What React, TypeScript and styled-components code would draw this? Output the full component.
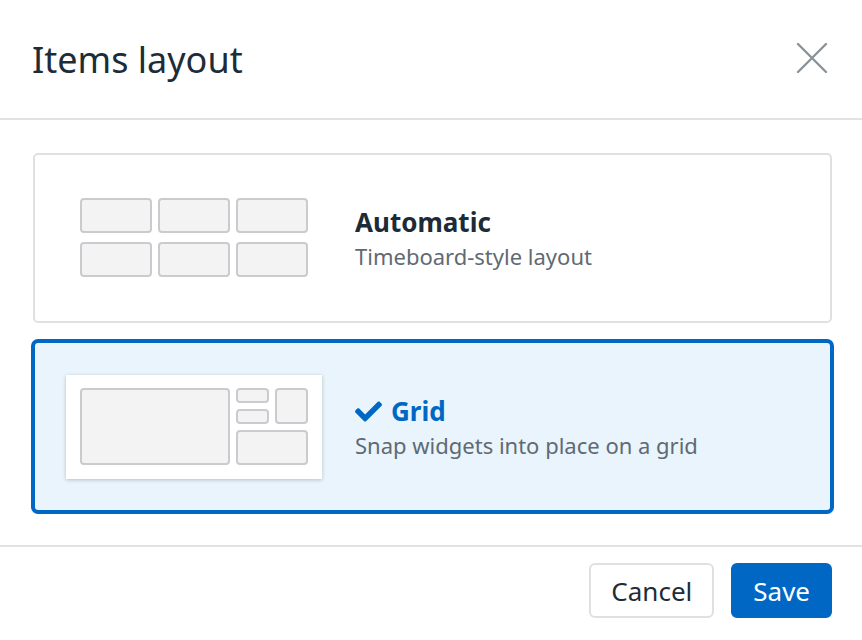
import React from "react";
import styled, { createGlobalStyle } from "styled-components";
import { FaCheck } from "react-icons/fa";

const Global = createGlobalStyle`
  html, body { margin: 0; padding: 0; background: #ffffff; }
  body { font-family: "Noto Sans", "Open Sans", sans-serif; }
  * { box-sizing: border-box; }
`;

const Dialog = styled.div`
  width: 862px;
  height: 640px;
  background: #fff;
  display: flex;
  flex-direction: column;
`;

const Header = styled.div`
  height: 120px;
  border-bottom: 2px solid #e1e2e5;
  display: flex;
  align-items: center;
  justify-content: space-between;
  padding: 0 33px 0 32px;
`;

const Title = styled.h1`
  margin: 0;
  font-size: 36px;
  font-weight: 400;
  color: #1e2c38;
  letter-spacing: 0;
`;

const CloseButton = styled.button`
  width: 34px;
  height: 34px;
  padding: 0;
  border: none;
  background: none;
  display: flex;
  align-items: center;
  justify-content: center;
  margin-top: -2px;
`;

const Body = styled.div`
  padding: 33px 30px 31px 33px;
  display: flex;
  flex-direction: column;
  gap: 16px;
  border-bottom: 2px solid #e1e2e5;
`;

const Card = styled.div<{ $selected?: boolean }>`
  display: flex;
  align-items: center;
  gap: 33px;
  height: ${(p) => (p.$selected ? "175px" : "170px")};
  border-radius: ${(p) => (p.$selected ? "7px" : "5px")};
  border: ${(p) => (p.$selected ? "4px solid #0068c4" : "2px solid #dfe0e3")};
  background: ${(p) => (p.$selected ? "#e9f4fc" : "#ffffff")};
  margin: ${(p) => (p.$selected ? "0 -2px" : "0")};
  padding-left: 31px;
`;

const Thumb = styled.div<{ $raised?: boolean }>`
  width: 256px;
  height: 104px;
  padding: 12px 15px 13px 14px;
  background: #fff;
  box-shadow: ${(p) => (p.$raised ? "0 1px 4px rgba(0,0,0,0.22)" : "none")};
  display: flex;
  align-items: center;
`;

const AutoGrid = styled.div`
  display: grid;
  grid-template-columns: repeat(3, 72px);
  grid-template-rows: 35px 35px;
  column-gap: 6px;
  row-gap: 9px;
`;

const SnapGrid = styled.div`
  display: grid;
  grid-template-columns: 150px 33px 33px;
  grid-template-rows: 15px 15px 35px;
  column-gap: 6px;
  row-gap: 6px;
`;

const Cell = styled.div<{ $col?: string; $row?: string }>`
  background: #f3f3f3;
  border: 2px solid #cbcbcf;
  border-radius: 4px;
  grid-column: ${(p) => p.$col || "auto"};
  grid-row: ${(p) => p.$row || "auto"};
`;

const Text = styled.div`
  display: flex;
  flex-direction: column;
  gap: 2px;
`;

const OptionTitle = styled.div<{ $selected?: boolean }>`
  display: flex;
  align-items: center;
  gap: 9px;
  font-size: 26px;
  font-weight: 700;
  color: ${(p) => (p.$selected ? "#0067c2" : "#1c2b37")};
  line-height: 34px;
`;

const CheckIcon = styled(FaCheck)`
  flex: none;
  margin-top: 1px;
`;

const OptionDesc = styled.div`
  font-size: 22px;
  color: #5f6a73;
  line-height: 30px;
`;

const Footer = styled.div`
  flex: 1;
  display: flex;
  justify-content: flex-end;
  align-items: flex-start;
  gap: 17px;
  padding: 16px 30px 0 0;
`;

const Button = styled.button<{ $primary?: boolean }>`
  height: 55px;
  padding: 0 20px;
  border-radius: 6px;
  font-family: "Noto Sans", sans-serif;
  font-size: 26px;
  border: 2px solid ${(p) => (p.$primary ? "#0067c2" : "#dfe0e3")};
  background: ${(p) => (p.$primary ? "#0068c4" : "#ffffff")};
  color: ${(p) => (p.$primary ? "#ffffff" : "#1e2c38")};
`;

export default function App() {
  return (
    <>
      <Global />
      <Dialog>
        <Header>
          <Title>Items layout</Title>
          <CloseButton aria-label="Close">
            <svg width="32" height="32" viewBox="0 0 32 32">
              <path d="M2 2 L30 30 M30 2 L2 30" stroke="#8b9398" strokeWidth="2.4" strokeLinecap="round" />
            </svg>
          </CloseButton>
        </Header>
        <Body>
          <Card>
            <Thumb>
              <AutoGrid>
                <Cell />
                <Cell />
                <Cell />
                <Cell />
                <Cell />
                <Cell />
              </AutoGrid>
            </Thumb>
            <Text>
              <OptionTitle>Automatic</OptionTitle>
              <OptionDesc>Timeboard-style layout</OptionDesc>
            </Text>
          </Card>
          <Card $selected>
            <Thumb $raised>
              <SnapGrid>
                <Cell $col="1" $row="1 / 4" />
                <Cell $col="2" $row="1" />
                <Cell $col="2" $row="2" />
                <Cell $col="3" $row="1 / 3" />
                <Cell $col="2 / 4" $row="3" />
              </SnapGrid>
            </Thumb>
            <Text>
              <OptionTitle $selected>
                <CheckIcon size={27} />
                Grid
              </OptionTitle>
              <OptionDesc>Snap widgets into place on a grid</OptionDesc>
            </Text>
          </Card>
        </Body>
        <Footer>
          <Button>Cancel</Button>
          <Button $primary>Save</Button>
        </Footer>
      </Dialog>
    </>
  );
}
